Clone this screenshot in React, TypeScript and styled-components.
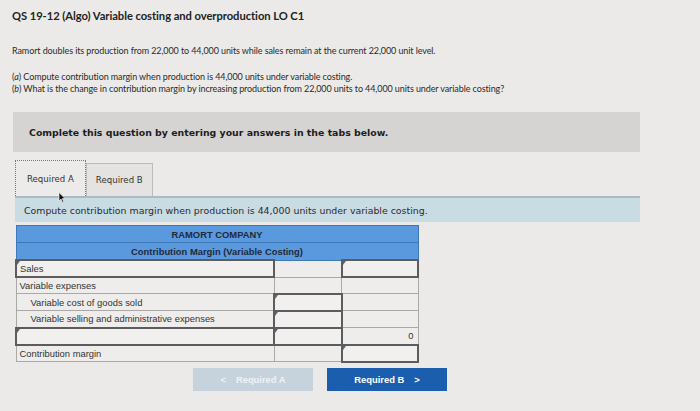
import React from "react";
import styled, { createGlobalStyle } from "styled-components";

const Global = createGlobalStyle`
  html, body { margin: 0; padding: 0; background: #ebeae8; }
  body { width: 700px; height: 411px; overflow: hidden; }
`;

const Page = styled.div`
  position: relative;
  padding: 7px 0 0 12px;
  color: #222;
`;

const Title = styled.h1`
  margin: 0;
  font-family: Lato, sans-serif;
  font-size: 11.2px;
  font-weight: 700;
  line-height: 17px;
  letter-spacing: -0.05px;
`;

const Para = styled.p`
  margin: 20px 0 0 0;
  font-family: Lato, sans-serif;
  font-size: 9px;
  letter-spacing: -0.1px;
  line-height: 13px;
  color: #2a2a2a;
`;

const Questions = styled(Para)`
  margin-top: 14px;
  line-height: 12px;
`;

const Em = styled.i`
  font-style: italic;
`;

const Box = styled.div`
  margin: 17px 0 0 1px;
  width: 627px;
  height: 40px;
  background: #d5d4d2;
  display: flex;
  align-items: center;
  padding-left: 16px;
  box-sizing: border-box;
  font-family: "DejaVu Sans", Verdana, sans-serif;
  font-size: 9.4px;
  font-weight: 700;
  color: #1d1d1d;
`;

const Section = styled.div`
  margin-left: 3px;
  width: 625px;
`;

const Tabs = styled.div`
  display: flex;
  margin-top: 8px;
  height: 36px;
  align-items: flex-end;
`;

const Tab = styled.div<{ $active?: boolean }>`
  height: ${(p) => (p.$active ? 36 : 33)}px;
  padding: 0 ${(p) => (p.$active ? 11 : 9)}px;
  box-sizing: border-box;
  display: flex;
  align-items: center;
  font-family: "DejaVu Sans", Verdana, sans-serif;
  font-size: 8.6px;
  color: #333;
  background: ${(p) => (p.$active ? "#ecebe9" : "#e4e3e1")};
  border: ${(p) => (p.$active ? "1.5px dotted #777" : "1px solid #bdbcba")};
  border-bottom: none;
`;

const Instruction = styled.div`
  height: 26px;
  background: #c9dbe3;
  border-top: 2px solid #a9bcc5;
  box-sizing: border-box;
  display: flex;
  align-items: center;
  padding-left: 9px;
  font-family: "DejaVu Sans", Verdana, sans-serif;
  font-size: 9.4px;
  color: #2b2b2b;
`;

const Table = styled.table`
  margin-top: 3px;
  width: 404px;
  border-collapse: collapse;
  font-family: "Liberation Sans", Arial, sans-serif;
  font-size: 9.4px;
  color: #333;
`;

const HeadCell = styled.th`
  background: #5a99de;
  color: #1f2a3a;
  font-weight: 700;
  font-size: 9.4px;
  height: 16px;
  padding: 0;
  text-align: center;
  border: 1px solid #3d78b8;
`;

const Cell = styled.td<{ $input?: boolean; $indent?: boolean; $right?: boolean; $w?: number }>`
  position: relative;
  height: 15px;
  padding: 0 ${(p) => (p.$right ? "4px" : "0")} 0 ${(p) => (p.$indent ? "14px" : "3px")};
  width: ${(p) => (p.$w ? `${p.$w}px` : "auto")};
  text-align: ${(p) => (p.$right ? "right" : "left")};
  background: ${(p) => (p.$input ? "#f1f0ee" : "#eeedeb")};
  border: ${(p) => (p.$input ? "2px solid #5c5c5c" : "1px solid #a9a9a7")};
  white-space: nowrap;
  &::before {
    content: "";
    display: ${(p) => (p.$input ? "block" : "none")};
    position: absolute;
    left: 0;
    top: 0;
    width: 0;
    height: 0;
    border-top: 4px solid #4a6a8a;
    border-right: 3px solid transparent;
  }
`;

const Buttons = styled.div`
  display: flex;
  gap: 14px;
  margin: 5px 0 0 181px;
`;

const Btn = styled.div<{ $primary?: boolean }>`
  width: 120px;
  height: 23px;
  display: flex;
  align-items: center;
  justify-content: center;
  gap: 10px;
  font-family: "Liberation Sans", Arial, sans-serif;
  font-size: 9.4px;
  font-weight: 700;
  background: ${(p) => (p.$primary ? "#1c5eae" : "#c6d3dd")};
  color: ${(p) => (p.$primary ? "#ffffff" : "#eef2f5")};
`;

const Cursor = styled.svg`
  position: absolute;
  left: 58px;
  top: 192px;
`;

type Row = {
  label: string;
  indent?: boolean;
  labelInput?: boolean;
  c2?: boolean;
  c3?: boolean;
  v3?: string;
};

const rows: Row[] = [
  { label: "Sales", c3: true },
  { label: "Variable expenses" },
  { label: "Variable cost of goods sold", indent: true, c2: true },
  { label: "Variable selling and administrative expenses", indent: true, c2: true },
  { label: "", labelInput: true, c2: true, v3: "0" },
  { label: "Contribution margin", c3: true },
];

export default function App() {
  return (
    <>
      <Global />
      <Page>
        <Title>QS 19-12 (Algo) Variable costing and overproduction LO C1</Title>
        <Para>
          Ramort doubles its production from 22,000 to 44,000 units while sales remain at the current 22,000 unit level.
        </Para>
        <Questions>
          (<Em>a</Em>) Compute contribution margin when production is 44,000 units under variable costing.
          <br />
          (<Em>b</Em>) What is the change in contribution margin by increasing production from 22,000 units to 44,000 units under variable costing?
        </Questions>
        <Box>Complete this question by entering your answers in the tabs below.</Box>
        <Section>
          <Tabs>
            <Tab $active>Required A</Tab>
            <Tab>Required B</Tab>
          </Tabs>
          <Instruction>Compute contribution margin when production is 44,000 units under variable costing.</Instruction>
          <Table>
            <thead>
              <tr>
                <HeadCell colSpan={3}>RAMORT COMPANY</HeadCell>
              </tr>
              <tr>
                <HeadCell colSpan={3}>Contribution Margin (Variable Costing)</HeadCell>
              </tr>
            </thead>
            <tbody>
              {rows.map((r, i) => (
                <tr key={i}>
                  <Cell $indent={r.indent} $input={r.labelInput || i === 0} $w={253}>
                    {r.label}
                  </Cell>
                  <Cell $input={r.c2} $w={73}></Cell>
                  <Cell $input={r.c3} $right $w={78}>
                    {r.v3 ?? ""}
                  </Cell>
                </tr>
              ))}
            </tbody>
          </Table>
        </Section>
        <Buttons>
          <Btn>
            <span>&lt;</span>
            <span>Required A</span>
          </Btn>
          <Btn $primary>
            <span>Required B</span>
            <span>&gt;</span>
          </Btn>
        </Buttons>
        <Cursor width="8" height="11" viewBox="0 0 8 11">
          <path d="M1 0.5 L1 9 L3 7 L4.5 10.5 L5.8 10 L4.3 6.6 L7 6.6 Z" fill="#111" stroke="#fff" strokeWidth="0.6" />
        </Cursor>
      </Page>
    </>
  );
}
